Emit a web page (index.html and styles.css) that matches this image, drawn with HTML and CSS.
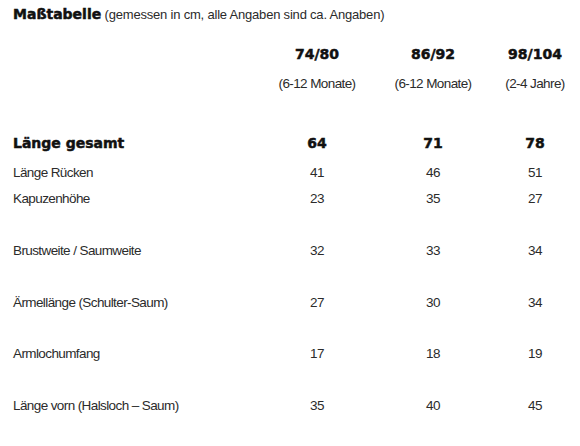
FILE: index.html
```html
<!DOCTYPE html>
<html lang="de">
  <head>
    <meta charset="UTF-8" />
    <meta name="viewport" content="width=device-width, initial-scale=1.0" />
    <title>Maßtabelle</title>
    <link rel="stylesheet" href="styles.css">
  </head>
  <body>
    <h1 class="title"><strong>Maßtabelle</strong> (gemessen in cm, alle Angaben sind ca. Angaben)</h1>
    <table class="sizes">
      <colgroup>
        <col class="label" />
        <col class="c1" />
        <col class="c2" />
        <col class="c3" />
      </colgroup>
      <tr class="head">
        <td></td>
        <td>74/80</td>
        <td>86/92</td>
        <td>98/104</td>
      </tr>
      <tr class="age">
        <td></td>
        <td>(6-12 Monate)</td>
        <td>(6-12 Monate)</td>
        <td>(2-4 Jahre)</td>
      </tr>
      <tr class="total">
        <td>Länge gesamt</td>
        <td>64</td>
        <td>71</td>
        <td>78</td>
      </tr>
      <tr class="first">
        <td>Länge Rücken</td>
        <td>41</td>
        <td>46</td>
        <td>51</td>
      </tr>
      <tr>
        <td>Kapuzenhöhe</td>
        <td>23</td>
        <td>35</td>
        <td>27</td>
      </tr>
      <tr class="spaced">
        <td>Brustweite / Saumweite</td>
        <td>32</td>
        <td>33</td>
        <td>34</td>
      </tr>
      <tr class="spaced">
        <td>Ärmellänge (Schulter-Saum)</td>
        <td>27</td>
        <td>30</td>
        <td>34</td>
      </tr>
      <tr class="spaced short">
        <td>Armlochumfang</td>
        <td>17</td>
        <td>18</td>
        <td>19</td>
      </tr>
      <tr class="spaced">
        <td>Länge vorn (Halsloch – Saum)</td>
        <td>35</td>
        <td>40</td>
        <td>45</td>
      </tr>
    </table>
  </body>
</html>
```

FILE: styles.css
```css
* {
  margin: 0;
  padding: 0;
}
body {
  background: #fff;
  color: #2b2b2b;
  font-family: "Liberation Sans", Arial, sans-serif;
  font-size: 13.5px;
  letter-spacing: -0.6px;
}
.title {
  height: 28px;
  line-height: 28px;
  padding-left: 13px;
  font-weight: normal;
  font-size: 13px;
  letter-spacing: -0.2px;
}
.title strong,
.head td,
.total td {
  font-family: "DejaVu Sans", sans-serif;
  font-weight: bold;
  font-size: 14px;
  letter-spacing: 0;
  color: #111;
  -webkit-text-stroke: 0.5px #111;
}
.sizes {
  border-collapse: collapse;
  table-layout: fixed;
  width: 579px;
}
.label {
  width: 259px;
}
.c1,
.c2 {
  width: 116px;
}
.c3 {
  width: 88px;
}
.sizes td {
  line-height: 26px;
  text-align: center;
  white-space: nowrap;
}
.sizes td:first-child {
  text-align: left;
  padding-left: 13px;
}
.head td {
  padding-top: 13px;
}
.age td {
  padding-top: 4px;
}
.total td {
  padding-top: 33px;
}
.first td {
  padding-top: 4px;
}
.spaced td {
  padding-top: 26px;
}
.spaced.short td {
  padding-top: 25px;
}
```
